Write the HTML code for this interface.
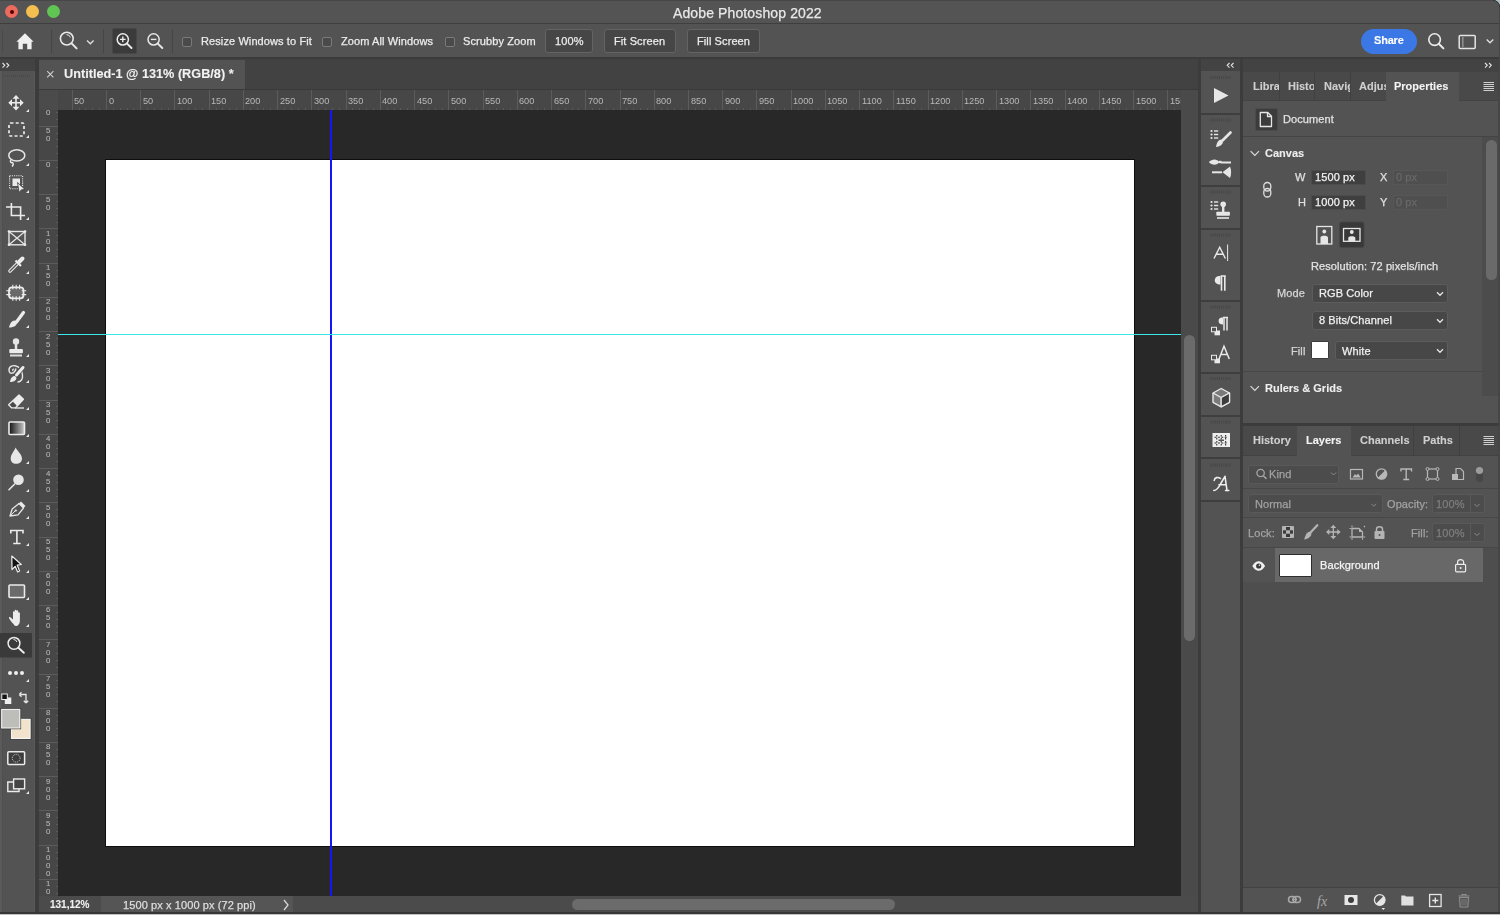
<!DOCTYPE html><html><head><meta charset="utf-8"><style>
*{margin:0;padding:0;box-sizing:border-box}
html,body{width:1500px;height:915px;overflow:hidden;background:#535353;font-family:"Liberation Sans",sans-serif;color:#e8e8e8;font-size:11px}
.a{position:absolute}
.t{position:absolute;white-space:nowrap;line-height:1;-webkit-text-stroke:0.25px currentColor;will-change:transform}
svg{position:absolute;overflow:visible}
.t[style*="bold"]{-webkit-text-stroke:0.1px currentColor}
</style></head><body><div class="a" style="left:0px;top:0px;width:1500px;height:23px;background:#545454;"></div>
<div class="a" style="left:0px;top:0px;width:1500px;height:1px;background:#474747;"></div>
<div class="a" style="left:0px;top:23px;width:1500px;height:1px;background:#3e3e3e;"></div>
<div class="a" style="left:5px;top:5px;width:13px;height:13px;border-radius:50%;background:#ed6a5e"></div>
<div class="a" style="left:9.5px;top:9.5px;width:4px;height:4px;border-radius:50%;background:#4d0000"></div>
<div class="a" style="left:26px;top:5px;width:13px;height:13px;border-radius:50%;background:#f5bf4f"></div>
<div class="a" style="left:47px;top:5px;width:13px;height:13px;border-radius:50%;background:#61c554"></div>
<div class="t" style="left:673px;top:6px;font-size:14px;color:#e8e8e8;font-weight:normal;letter-spacing:0.12px">Adobe Photoshop 2022</div>
<div class="a" style="left:0px;top:24px;width:1500px;height:33px;background:#535353;"></div>
<div class="a" style="left:0px;top:57px;width:1500px;height:2px;background:#3b3b3b;"></div>
<div class="a" style="left:2px;top:30px;width:1px;height:23px;background:#4a4a4a"></div>
<svg style="left:0;top:0" width="200" height="60">
 <path d="M25 33.2 L33.6 41.8 L31.6 41.8 L31.6 49.2 L27.2 49.2 L27.2 43.8 L22.8 43.8 L22.8 49.2 L18.4 49.2 L18.4 41.8 L16.4 41.8 Z" fill="#efefef"/>
 <circle cx="66.8" cy="38.6" r="6.4" stroke="#e8e8e8" stroke-width="1.6" fill="none"/>
 <path d="M66.5 34.6 A4 4 0 0 1 70.4 37.4" stroke="#e8e8e8" stroke-width="1" fill="none"/>
 <path d="M71.6 43.4 L76.6 48.4" stroke="#e8e8e8" stroke-width="2" stroke-linecap="round"/>
 <path d="M87 40.5 L90.3 43.8 L93.6 40.5" stroke="#e0e0e0" stroke-width="1.3" fill="none"/>
</svg>
<div class="a" style="left:51px;top:29px;width:1px;height:24px;background:#464646"></div>
<div class="a" style="left:103px;top:29px;width:1px;height:24px;background:#464646"></div>
<div class="a" style="left:172px;top:29px;width:1px;height:24px;background:#464646"></div>
<div class="a" style="left:112px;top:28px;width:25px;height:26px;background:#3b3b3b;border:1px solid #474747;border-radius:2px"></div>
<svg style="left:0;top:0" width="200" height="60">
 <circle cx="122.8" cy="39.4" r="5.6" stroke="#ececec" stroke-width="1.5" fill="none"/>
 <path d="M120 39.4 H125.6 M122.8 36.6 V42.2" stroke="#ececec" stroke-width="1.4"/>
 <path d="M127 43.6 L131.5 48" stroke="#ececec" stroke-width="2" stroke-linecap="round"/>
 <circle cx="153.6" cy="39.4" r="5.6" stroke="#e6e6e6" stroke-width="1.5" fill="none"/>
 <path d="M150.8 39.4 H156.4" stroke="#e6e6e6" stroke-width="1.4"/>
 <path d="M157.8 43.6 L162.3 48" stroke="#e6e6e6" stroke-width="2" stroke-linecap="round"/>
</svg>
<div class="a" style="left:182px;top:37px;width:10px;height:10px;border:1px solid #7a7a7a;background:#4a4a4a;border-radius:2px"></div>
<div class="t" style="left:200.5px;top:36px;font-size:11px;letter-spacing:0.1px;color:#ececec;font-weight:normal">Resize Windows to Fit</div>
<div class="a" style="left:322px;top:37px;width:10px;height:10px;border:1px solid #7a7a7a;background:#4a4a4a;border-radius:2px"></div>
<div class="t" style="left:340.7px;top:36px;font-size:11px;letter-spacing:0.1px;color:#ececec">Zoom All Windows</div>
<div class="a" style="left:445px;top:37px;width:10px;height:10px;border:1px solid #7a7a7a;background:#4a4a4a;border-radius:2px"></div>
<div class="t" style="left:463.3px;top:36px;font-size:11px;letter-spacing:0.1px;color:#ececec">Scrubby Zoom</div>
<div class="a" style="left:545px;top:29px;width:48px;height:24px;background:#464646;border:1px solid #646464;border-radius:3px"></div>
<div class="t" style="left:554.5px;top:36px;font-size:11px;letter-spacing:0.1px;color:#ececec">100%</div>
<div class="a" style="left:604px;top:29px;width:72px;height:24px;background:#464646;border:1px solid #646464;border-radius:3px"></div>
<div class="t" style="left:614px;top:36px;font-size:11px;letter-spacing:0.1px;color:#ececec">Fit Screen</div>
<div class="a" style="left:687px;top:29px;width:73px;height:24px;background:#464646;border:1px solid #646464;border-radius:3px"></div>
<div class="t" style="left:696.5px;top:36px;font-size:11px;letter-spacing:0.1px;color:#ececec">Fill Screen</div>
<div class="a" style="left:1361px;top:29px;width:56px;height:25px;background:#3b78e6;border-radius:13px"></div>
<div class="t" style="left:1374px;top:35px;font-size:11px;color:#ffffff;font-weight:bold;letter-spacing:-0.2px">Share</div>
<svg style="left:1400px;top:0" width="100" height="60">
 <circle cx="34.6" cy="39.6" r="5.8" stroke="#ececec" stroke-width="1.6" fill="none"/>
 <path d="M38.8 43.8 L43.4 48.4" stroke="#ececec" stroke-width="2" stroke-linecap="round"/>
 <rect x="59.2" y="35.4" width="16" height="13" rx="1" stroke="#e4e4e4" stroke-width="1.5" fill="none"/>
 <path d="M62.8 37.5 V46.5" stroke="#cfcfcf" stroke-width="1.5" stroke-dasharray="1 1"/>
 <path d="M86.7 39.5 L90 42.8 L93.3 39.5" stroke="#e0e0e0" stroke-width="1.3" fill="none"/>
</svg>

<div class="a" style="left:0px;top:59px;width:35px;height:854px;background:#535353;"></div>
<div class="a" style="left:0px;top:59px;width:35px;height:12px;background:#434343;"></div>
<svg style="left:0;top:55px" width="20" height="20"><path d="M2.5 8 L4.8 10.3 L2.5 12.6 M6.5 8 L8.8 10.3 L6.5 12.6" stroke="#e4e4e4" stroke-width="1.1" fill="none"/></svg>
<div class="a" style="left:35px;top:59px;width:4px;height:854px;background:#3c3c3c;"></div>
<div class="a" style="left:0px;top:71px;width:2px;height:841px;background:#5a5a5a;"></div>
<div class="a" style="left:2px;top:71px;width:1px;height:841px;background:#4f4f4f;"></div>
<div class="a" style="left:34px;top:71px;width:1px;height:841px;background:#595959;"></div>
<svg style="left:0;top:0" width="35" height="913">
<g fill="#e9e9e9" stroke="none">
 <!-- small corner triangles -->
 <path d="M26 112 L29 109 L29 112 Z"/>
 <path d="M26 138 L29 135 L29 138 Z"/>
 <path d="M26 166 L29 163 L29 166 Z"/>
 <path d="M26 193 L29 190 L29 193 Z"/>
 <path d="M26 220 L29 217 L29 220 Z"/>
 <path d="M26 274 L29 271 L29 274 Z"/>
 <path d="M26 301 L29 298 L29 301 Z"/>
 <path d="M26 328 L29 325 L29 328 Z"/>
 <path d="M26 357 L29 354 L29 357 Z"/>
 <path d="M26 383 L29 380 L29 383 Z"/>
 <path d="M26 410 L29 407 L29 410 Z"/>
 <path d="M26 437 L29 434 L29 437 Z"/>
 <path d="M26 464 L29 461 L29 464 Z"/>
 <path d="M26 492 L29 489 L29 492 Z"/>
 <path d="M26 519 L29 516 L29 519 Z"/>
 <path d="M26 546 L29 543 L29 546 Z"/>
 <path d="M26 573 L29 570 L29 573 Z"/>
 <path d="M26 600 L29 597 L29 600 Z"/>
 <path d="M26 627 L29 624 L29 627 Z"/>
 <path d="M26 682 L29 679 L29 682 Z"/>
 <path d="M26 794 L29 791 L29 794 Z"/>
</g>
<!-- grip -->
<path d="M3 76 H30" stroke="#4a4a4a" stroke-width="2" stroke-dasharray="1 1"/>
<!-- move -->
<g stroke="#ececec" fill="#ececec">
 <path d="M16 95 L19.5 98.8 L12.5 98.8 Z M16 110.5 L19.5 106.7 L12.5 106.7 Z M8.3 102.8 L12 99.3 L12 106.3 Z M23.7 102.8 L20 99.3 L20 106.3 Z" stroke="none"/>
 <path d="M16 98 V108 M11 102.8 H21" stroke-width="1.6" fill="none"/>
</g>
<!-- marquee -->
<rect x="9" y="123" width="15" height="13" rx="1.5" stroke="#ececec" stroke-width="1.7" fill="none" stroke-dasharray="3 2.2"/>
<!-- lasso -->
<ellipse cx="16.8" cy="155.4" rx="8" ry="5.6" stroke="#e6e6e6" stroke-width="1.5" fill="none"/>
<path d="M11 160 C9.5 161.5 11 163 12.5 162.5 C14 163.5 13 165.5 12 166.5" stroke="#e6e6e6" stroke-width="1.5" fill="none"/>
<!-- object selection -->
<rect x="9.6" y="175.8" width="13" height="13" stroke="#e6e6e6" stroke-width="1.1" fill="none" stroke-dasharray="1.1 1.1"/>
<rect x="12.5" y="178.5" width="7.5" height="7.5" fill="#e9e9e9"/>
<path d="M17.5 182.5 L25 189.5 L21.5 189.8 L19 192.5 Z" fill="#e9e9e9" stroke="#3a3a3a" stroke-width="0.8"/>
<!-- crop -->
<path d="M6 207 H11 M11.4 203 V215.5 H21 M11.4 207 H20.6 V220 M21 215.5 H25" stroke="#ececec" stroke-width="1.6" fill="none"/>
<!-- frame -->
<rect x="9" y="231.5" width="16" height="13.3" stroke="#e6e6e6" stroke-width="1.4" fill="none"/>
<path d="M9 231.5 L25 244.8 M25 231.5 L9 244.8" stroke="#e6e6e6" stroke-width="1.2"/>
<g fill="#ececec"><circle cx="9" cy="231.5" r="1.3"/><circle cx="25" cy="231.5" r="1.3"/><circle cx="9" cy="244.8" r="1.3"/><circle cx="25" cy="244.8" r="1.3"/></g>
<!-- eyedropper -->
<path d="M10 271 L18 263" stroke="#e6e6e6" stroke-width="3.6" stroke-linecap="round"/>
<path d="M10 271 L18 263" stroke="#535353" stroke-width="1.2" stroke-linecap="round"/>
<path d="M19 262 L22.5 258.5" stroke="#ececec" stroke-width="4" stroke-linecap="round"/>
<path d="M15.5 260.5 L21 266" stroke="#ececec" stroke-width="2.2"/>
<!-- healing -->
<rect x="9" y="287.3" width="14.5" height="11" rx="3" stroke="#ececec" stroke-width="1.8" fill="#6a6a6a"/>
<path d="M12.8 284.8 V289.3 M16.2 284.8 V289.3 M19.6 284.8 V289.3 M12.8 296.3 V300.8 M16.2 296.3 V300.8 M19.6 296.3 V300.8 M6.3 290.8 H10.8 M6.3 294.6 H10.8 M21.7 290.8 H26.2 M21.7 294.6 H26.2" stroke="#ececec" stroke-width="1.1"/>
<!-- brush -->
<path d="M16.5 322 L23.5 312.5" stroke="#ececec" stroke-width="3.2" stroke-linecap="round"/>
<path d="M15.5 320.5 C12 320 10 323 9 327.5 C13 327.5 16.5 326 17 323 Z" fill="#ececec"/>
<!-- stamp -->
<circle cx="16" cy="341.5" r="3.2" fill="#e6e6e6"/>
<path d="M16 343 V349" stroke="#e6e6e6" stroke-width="2.5"/>
<rect x="9.3" y="349" width="13.6" height="4.2" rx="1" fill="#ececec"/>
<rect x="10" y="354.5" width="12" height="2" fill="#dcdcdc"/>
<!-- history brush -->
<path d="M16 368.5 C15 374 9 375 9 370 C9 366 13 365 16 366 C20 367 22 371 22.5 375 C23 379 21 382 17.5 382" stroke="#e6e6e6" stroke-width="1.4" fill="none"/>
<path d="M13 371 C12 369.5 13.5 368.5 14 369.5" stroke="#e6e6e6" stroke-width="1.2" fill="none"/>
<path d="M16 375 L23 367" stroke="#535353" stroke-width="5" stroke-linecap="round"/>
<path d="M16.5 375 L23 367.5" stroke="#ececec" stroke-width="3" stroke-linecap="round"/>
<path d="M15 376 C12 376 10.5 378.5 10 382 C13 382 16 381 16.5 378 Z" fill="#ececec"/>
<!-- eraser -->
<path d="M19 395 L23.5 399.3 L15.5 407.8 L11.5 407.8 L8.6 404.8 Z" fill="#4a4a4a" stroke="#ececec" stroke-width="1.3" stroke-linejoin="round"/>
<path d="M19 395 L23.5 399.3 L17 406 L12.8 401.6 Z" fill="#ececec"/>
<path d="M15 408 H24" stroke="#e6e6e6" stroke-width="1.4"/>
<!-- gradient -->
<defs><linearGradient id="gr" x1="0" x2="1" y1="0" y2="0"><stop offset="0" stop-color="#111"/><stop offset="1" stop-color="#c8c8c8"/></linearGradient></defs>
<rect x="9" y="422" width="15.5" height="12.5" stroke="#ececec" stroke-width="1.6" fill="url(#gr)" rx="1"/>
<!-- blur drop -->
<path d="M15.6 447.5 C17 451 22 454 22 458.5 C22 462 19.5 463.8 16.2 463.8 C12.8 463.8 10.7 461.8 10.7 458.5 C10.7 454 14.5 451 15.6 447.5 Z" fill="#e6e6e6"/>
<!-- dodge -->
<circle cx="18.5" cy="479.8" r="5.3" fill="#e6e6e6"/>
<path d="M14.5 484.2 L9 489.8" stroke="#e6e6e6" stroke-width="1.6" stroke-linecap="round"/>
<!-- pen -->
<path d="M10 516 L12.2 509 L19 503.5 L23.5 508 L18 514.8 Z" fill="none" stroke="#e6e6e6" stroke-width="1.3" stroke-linejoin="round"/>
<path d="M19 503.5 L21 501.5 L25.5 506 L23.5 508 Z" fill="#ececec"/>
<path d="M10 516 L15.5 510.5" stroke="#e6e6e6" stroke-width="1"/>
<circle cx="15.8" cy="510.5" r="1.1" fill="#ececec"/>
<!-- type -->
<path d="M10.8 533.6 V530.5 H23 V533.6 M16.9 530.5 V543.5 M13.2 543.5 H20.6" stroke="#ececec" stroke-width="1.6" fill="none"/>
<!-- path select -->
<path d="M11.8 556 L21.3 564.5 L17.2 565.2 L19.6 571 L17.6 572 L15.2 566.3 L12 569.5 Z" fill="#111" stroke="#ececec" stroke-width="1.2" stroke-linejoin="round"/>
<!-- rectangle -->
<rect x="9" y="585" width="15.5" height="12.5" rx="1" stroke="#ececec" stroke-width="1.6" fill="#6b6b6b"/>
<!-- hand -->
<path d="M13.5 624 C11.5 622 9.5 619.5 9 618 C8.7 617 9.8 616.7 10.6 617.4 L13 619.6 L13 612 C13 611 14.7 611 14.7 612 V617 L14.7 610.6 C14.7 609.6 16.4 609.6 16.4 610.6 V617 L16.4 611 C16.4 610 18.2 610 18.2 611 V617.5 L18.2 613 C18.2 612 19.9 612 19.9 613 V620 C19.9 624 18 626 15.8 626 C14.8 626 14 625 13.5 624 Z" fill="#ececec"/>
<!-- zoom highlight -->
<rect x="0" y="633" width="32" height="24.5" fill="#3a3a3a"/>
<circle cx="14" cy="643.3" r="5.9" stroke="#ececec" stroke-width="1.5" fill="none"/>
<path d="M13.5 639.5 A3.7 3.7 0 0 1 17 642" stroke="#ececec" stroke-width="1" fill="none"/>
<path d="M18.4 647.8 L23.8 652.8" stroke="#ececec" stroke-width="2" stroke-linecap="round"/>
<!-- more -->
<g fill="#efefef"><circle cx="10" cy="673" r="2"/><circle cx="16" cy="673" r="2"/><circle cx="22" cy="673" r="2"/></g>
<!-- default colors -->
<rect x="4.8" y="697.5" width="6.5" height="6.5" fill="#efefef"/>
<rect x="1.8" y="694" width="5.5" height="5.5" fill="#111" stroke="#efefef" stroke-width="1"/>
<path d="M20.5 694.5 H26 V702 M19.2 694.5 L21.5 692.3 M19.2 694.5 L21.5 696.7 M26 703 L23.8 700.7 M26 703 L28.2 700.7" stroke="#e6e6e6" stroke-width="1.3" fill="none"/>
<!-- fg/bg -->
<rect x="11.3" y="719" width="19" height="19.5" fill="#f2e4cc" stroke="#f4f4f4" stroke-width="1.4"/>
<rect x="10.6" y="718.3" width="20.4" height="21" fill="none" stroke="#2a2a2a" stroke-width="0.6"/>
<rect x="1.5" y="709.2" width="18.5" height="19" fill="#bdbdb9" stroke="#f4f4f4" stroke-width="1.4"/>
<rect x="0.8" y="708.5" width="20" height="20.4" fill="none" stroke="#2a2a2a" stroke-width="0.6"/>
<!-- quick mask -->
<rect x="7.8" y="751.8" width="16.8" height="12.8" rx="1" stroke="#ececec" stroke-width="1.5" fill="#3d3d3d"/>
<circle cx="16.2" cy="758.2" r="3.9" stroke="#d8d8d8" stroke-width="1" fill="none" stroke-dasharray="1 1"/>
<!-- screen mode -->
<rect x="13.6" y="779" width="11" height="9.8" stroke="#ececec" stroke-width="1.4" fill="#444"/>
<path d="M13 782 H7.8 V791.5 H19 V789" stroke="#ececec" stroke-width="1.4" fill="none"/>
</svg>

<div class="a" style="left:39px;top:59px;width:1159px;height:30px;background:#424242;"></div>
<div class="a" style="left:39px;top:60px;width:206px;height:29px;background:#535353;"></div>
<svg style="left:40px;top:64px" width="20" height="20"><path d="M7.2 7.2 L13.4 13.4 M13.4 7.2 L7.2 13.4" stroke="#d0d0d0" stroke-width="1.1"/></svg>
<div class="t" style="left:64px;top:68px;font-size:12.7px;color:#f2f2f2;font-weight:bold;">Untitled-1 @ 131% (RGB/8) *</div>
<div class="a" style="left:39px;top:89px;width:1159px;height:1px;background:#3a3a3a;"></div>
<div class="a" style="left:39px;top:90px;width:1142px;height:20px;background:#474747;"></div>
<div class="a" style="left:39px;top:110px;width:19px;height:786px;background:#474747;"></div>
<div class="a" style="left:39px;top:90px;width:19px;height:20px;background:#4b4b4b;"></div>
<div class="a" style="left:58px;top:110px;width:1123px;height:786px;background:#282828;"></div>
<div class="a" style="left:105px;top:159px;width:1030px;height:688px;background:#0e0e0e;"></div>
<div class="a" style="left:106px;top:160px;width:1028px;height:686px;background:#ffffff;"></div>
<div class="a" style="left:330px;top:110px;width:2px;height:786px;background:#1616f2;"></div>
<div class="a" style="left:58px;top:333.8px;width:1123px;height:1.5px;background:#3ee6ec;"></div>
<div class="a" style="left:58px;top:90px;width:1123px;height:20px;overflow:hidden"><div class="a" style="left:13.77px;top:0px;width:1px;height:20px;background:#5c5c5c"></div><div class="t" style="left:16.27px;top:6.8px;font-size:9.2px;color:#b8b8b8;-webkit-text-stroke:0">50</div><div class="a" style="left:20.61px;top:17.5px;width:1px;height:2px;background:#5a5a5a"></div><div class="a" style="left:27.46px;top:17.5px;width:1px;height:2px;background:#5a5a5a"></div><div class="a" style="left:34.31px;top:17.5px;width:1px;height:2px;background:#5a5a5a"></div><div class="a" style="left:41.15px;top:17.5px;width:1px;height:2px;background:#5a5a5a"></div><div class="a" style="left:48.00px;top:0px;width:1px;height:20px;background:#5c5c5c"></div><div class="t" style="left:50.50px;top:6.8px;font-size:9.2px;color:#b8b8b8;-webkit-text-stroke:0">0</div><div class="a" style="left:54.85px;top:17.5px;width:1px;height:2px;background:#5a5a5a"></div><div class="a" style="left:61.69px;top:17.5px;width:1px;height:2px;background:#5a5a5a"></div><div class="a" style="left:68.54px;top:17.5px;width:1px;height:2px;background:#5a5a5a"></div><div class="a" style="left:75.39px;top:17.5px;width:1px;height:2px;background:#5a5a5a"></div><div class="a" style="left:82.24px;top:0px;width:1px;height:20px;background:#5c5c5c"></div><div class="t" style="left:84.74px;top:6.8px;font-size:9.2px;color:#b8b8b8;-webkit-text-stroke:0">50</div><div class="a" style="left:89.08px;top:17.5px;width:1px;height:2px;background:#5a5a5a"></div><div class="a" style="left:95.93px;top:17.5px;width:1px;height:2px;background:#5a5a5a"></div><div class="a" style="left:102.78px;top:17.5px;width:1px;height:2px;background:#5a5a5a"></div><div class="a" style="left:109.62px;top:17.5px;width:1px;height:2px;background:#5a5a5a"></div><div class="a" style="left:116.47px;top:0px;width:1px;height:20px;background:#5c5c5c"></div><div class="t" style="left:118.97px;top:6.8px;font-size:9.2px;color:#b8b8b8;-webkit-text-stroke:0">100</div><div class="a" style="left:123.32px;top:17.5px;width:1px;height:2px;background:#5a5a5a"></div><div class="a" style="left:130.16px;top:17.5px;width:1px;height:2px;background:#5a5a5a"></div><div class="a" style="left:137.01px;top:17.5px;width:1px;height:2px;background:#5a5a5a"></div><div class="a" style="left:143.86px;top:17.5px;width:1px;height:2px;background:#5a5a5a"></div><div class="a" style="left:150.70px;top:0px;width:1px;height:20px;background:#5c5c5c"></div><div class="t" style="left:153.20px;top:6.8px;font-size:9.2px;color:#b8b8b8;-webkit-text-stroke:0">150</div><div class="a" style="left:157.55px;top:17.5px;width:1px;height:2px;background:#5a5a5a"></div><div class="a" style="left:164.40px;top:17.5px;width:1px;height:2px;background:#5a5a5a"></div><div class="a" style="left:171.25px;top:17.5px;width:1px;height:2px;background:#5a5a5a"></div><div class="a" style="left:178.09px;top:17.5px;width:1px;height:2px;background:#5a5a5a"></div><div class="a" style="left:184.94px;top:0px;width:1px;height:20px;background:#5c5c5c"></div><div class="t" style="left:187.44px;top:6.8px;font-size:9.2px;color:#b8b8b8;-webkit-text-stroke:0">200</div><div class="a" style="left:191.79px;top:17.5px;width:1px;height:2px;background:#5a5a5a"></div><div class="a" style="left:198.63px;top:17.5px;width:1px;height:2px;background:#5a5a5a"></div><div class="a" style="left:205.48px;top:17.5px;width:1px;height:2px;background:#5a5a5a"></div><div class="a" style="left:212.33px;top:17.5px;width:1px;height:2px;background:#5a5a5a"></div><div class="a" style="left:219.18px;top:0px;width:1px;height:20px;background:#5c5c5c"></div><div class="t" style="left:221.68px;top:6.8px;font-size:9.2px;color:#b8b8b8;-webkit-text-stroke:0">250</div><div class="a" style="left:226.02px;top:17.5px;width:1px;height:2px;background:#5a5a5a"></div><div class="a" style="left:232.87px;top:17.5px;width:1px;height:2px;background:#5a5a5a"></div><div class="a" style="left:239.72px;top:17.5px;width:1px;height:2px;background:#5a5a5a"></div><div class="a" style="left:246.56px;top:17.5px;width:1px;height:2px;background:#5a5a5a"></div><div class="a" style="left:253.41px;top:0px;width:1px;height:20px;background:#5c5c5c"></div><div class="t" style="left:255.91px;top:6.8px;font-size:9.2px;color:#b8b8b8;-webkit-text-stroke:0">300</div><div class="a" style="left:260.26px;top:17.5px;width:1px;height:2px;background:#5a5a5a"></div><div class="a" style="left:267.10px;top:17.5px;width:1px;height:2px;background:#5a5a5a"></div><div class="a" style="left:273.95px;top:17.5px;width:1px;height:2px;background:#5a5a5a"></div><div class="a" style="left:280.80px;top:17.5px;width:1px;height:2px;background:#5a5a5a"></div><div class="a" style="left:287.64px;top:0px;width:1px;height:20px;background:#5c5c5c"></div><div class="t" style="left:290.14px;top:6.8px;font-size:9.2px;color:#b8b8b8;-webkit-text-stroke:0">350</div><div class="a" style="left:294.49px;top:17.5px;width:1px;height:2px;background:#5a5a5a"></div><div class="a" style="left:301.34px;top:17.5px;width:1px;height:2px;background:#5a5a5a"></div><div class="a" style="left:308.19px;top:17.5px;width:1px;height:2px;background:#5a5a5a"></div><div class="a" style="left:315.03px;top:17.5px;width:1px;height:2px;background:#5a5a5a"></div><div class="a" style="left:321.88px;top:0px;width:1px;height:20px;background:#5c5c5c"></div><div class="t" style="left:324.38px;top:6.8px;font-size:9.2px;color:#b8b8b8;-webkit-text-stroke:0">400</div><div class="a" style="left:328.73px;top:17.5px;width:1px;height:2px;background:#5a5a5a"></div><div class="a" style="left:335.57px;top:17.5px;width:1px;height:2px;background:#5a5a5a"></div><div class="a" style="left:342.42px;top:17.5px;width:1px;height:2px;background:#5a5a5a"></div><div class="a" style="left:349.27px;top:17.5px;width:1px;height:2px;background:#5a5a5a"></div><div class="a" style="left:356.12px;top:0px;width:1px;height:20px;background:#5c5c5c"></div><div class="t" style="left:358.62px;top:6.8px;font-size:9.2px;color:#b8b8b8;-webkit-text-stroke:0">450</div><div class="a" style="left:362.96px;top:17.5px;width:1px;height:2px;background:#5a5a5a"></div><div class="a" style="left:369.81px;top:17.5px;width:1px;height:2px;background:#5a5a5a"></div><div class="a" style="left:376.66px;top:17.5px;width:1px;height:2px;background:#5a5a5a"></div><div class="a" style="left:383.50px;top:17.5px;width:1px;height:2px;background:#5a5a5a"></div><div class="a" style="left:390.35px;top:0px;width:1px;height:20px;background:#5c5c5c"></div><div class="t" style="left:392.85px;top:6.8px;font-size:9.2px;color:#b8b8b8;-webkit-text-stroke:0">500</div><div class="a" style="left:397.20px;top:17.5px;width:1px;height:2px;background:#5a5a5a"></div><div class="a" style="left:404.04px;top:17.5px;width:1px;height:2px;background:#5a5a5a"></div><div class="a" style="left:410.89px;top:17.5px;width:1px;height:2px;background:#5a5a5a"></div><div class="a" style="left:417.74px;top:17.5px;width:1px;height:2px;background:#5a5a5a"></div><div class="a" style="left:424.58px;top:0px;width:1px;height:20px;background:#5c5c5c"></div><div class="t" style="left:427.08px;top:6.8px;font-size:9.2px;color:#b8b8b8;-webkit-text-stroke:0">550</div><div class="a" style="left:431.43px;top:17.5px;width:1px;height:2px;background:#5a5a5a"></div><div class="a" style="left:438.28px;top:17.5px;width:1px;height:2px;background:#5a5a5a"></div><div class="a" style="left:445.13px;top:17.5px;width:1px;height:2px;background:#5a5a5a"></div><div class="a" style="left:451.97px;top:17.5px;width:1px;height:2px;background:#5a5a5a"></div><div class="a" style="left:458.82px;top:0px;width:1px;height:20px;background:#5c5c5c"></div><div class="t" style="left:461.32px;top:6.8px;font-size:9.2px;color:#b8b8b8;-webkit-text-stroke:0">600</div><div class="a" style="left:465.67px;top:17.5px;width:1px;height:2px;background:#5a5a5a"></div><div class="a" style="left:472.51px;top:17.5px;width:1px;height:2px;background:#5a5a5a"></div><div class="a" style="left:479.36px;top:17.5px;width:1px;height:2px;background:#5a5a5a"></div><div class="a" style="left:486.21px;top:17.5px;width:1px;height:2px;background:#5a5a5a"></div><div class="a" style="left:493.06px;top:0px;width:1px;height:20px;background:#5c5c5c"></div><div class="t" style="left:495.56px;top:6.8px;font-size:9.2px;color:#b8b8b8;-webkit-text-stroke:0">650</div><div class="a" style="left:499.90px;top:17.5px;width:1px;height:2px;background:#5a5a5a"></div><div class="a" style="left:506.75px;top:17.5px;width:1px;height:2px;background:#5a5a5a"></div><div class="a" style="left:513.60px;top:17.5px;width:1px;height:2px;background:#5a5a5a"></div><div class="a" style="left:520.44px;top:17.5px;width:1px;height:2px;background:#5a5a5a"></div><div class="a" style="left:527.29px;top:0px;width:1px;height:20px;background:#5c5c5c"></div><div class="t" style="left:529.79px;top:6.8px;font-size:9.2px;color:#b8b8b8;-webkit-text-stroke:0">700</div><div class="a" style="left:534.14px;top:17.5px;width:1px;height:2px;background:#5a5a5a"></div><div class="a" style="left:540.98px;top:17.5px;width:1px;height:2px;background:#5a5a5a"></div><div class="a" style="left:547.83px;top:17.5px;width:1px;height:2px;background:#5a5a5a"></div><div class="a" style="left:554.68px;top:17.5px;width:1px;height:2px;background:#5a5a5a"></div><div class="a" style="left:561.52px;top:0px;width:1px;height:20px;background:#5c5c5c"></div><div class="t" style="left:564.02px;top:6.8px;font-size:9.2px;color:#b8b8b8;-webkit-text-stroke:0">750</div><div class="a" style="left:568.37px;top:17.5px;width:1px;height:2px;background:#5a5a5a"></div><div class="a" style="left:575.22px;top:17.5px;width:1px;height:2px;background:#5a5a5a"></div><div class="a" style="left:582.07px;top:17.5px;width:1px;height:2px;background:#5a5a5a"></div><div class="a" style="left:588.91px;top:17.5px;width:1px;height:2px;background:#5a5a5a"></div><div class="a" style="left:595.76px;top:0px;width:1px;height:20px;background:#5c5c5c"></div><div class="t" style="left:598.26px;top:6.8px;font-size:9.2px;color:#b8b8b8;-webkit-text-stroke:0">800</div><div class="a" style="left:602.61px;top:17.5px;width:1px;height:2px;background:#5a5a5a"></div><div class="a" style="left:609.45px;top:17.5px;width:1px;height:2px;background:#5a5a5a"></div><div class="a" style="left:616.30px;top:17.5px;width:1px;height:2px;background:#5a5a5a"></div><div class="a" style="left:623.15px;top:17.5px;width:1px;height:2px;background:#5a5a5a"></div><div class="a" style="left:630.00px;top:0px;width:1px;height:20px;background:#5c5c5c"></div><div class="t" style="left:632.50px;top:6.8px;font-size:9.2px;color:#b8b8b8;-webkit-text-stroke:0">850</div><div class="a" style="left:636.84px;top:17.5px;width:1px;height:2px;background:#5a5a5a"></div><div class="a" style="left:643.69px;top:17.5px;width:1px;height:2px;background:#5a5a5a"></div><div class="a" style="left:650.54px;top:17.5px;width:1px;height:2px;background:#5a5a5a"></div><div class="a" style="left:657.38px;top:17.5px;width:1px;height:2px;background:#5a5a5a"></div><div class="a" style="left:664.23px;top:0px;width:1px;height:20px;background:#5c5c5c"></div><div class="t" style="left:666.73px;top:6.8px;font-size:9.2px;color:#b8b8b8;-webkit-text-stroke:0">900</div><div class="a" style="left:671.08px;top:17.5px;width:1px;height:2px;background:#5a5a5a"></div><div class="a" style="left:677.92px;top:17.5px;width:1px;height:2px;background:#5a5a5a"></div><div class="a" style="left:684.77px;top:17.5px;width:1px;height:2px;background:#5a5a5a"></div><div class="a" style="left:691.62px;top:17.5px;width:1px;height:2px;background:#5a5a5a"></div><div class="a" style="left:698.47px;top:0px;width:1px;height:20px;background:#5c5c5c"></div><div class="t" style="left:700.97px;top:6.8px;font-size:9.2px;color:#b8b8b8;-webkit-text-stroke:0">950</div><div class="a" style="left:705.31px;top:17.5px;width:1px;height:2px;background:#5a5a5a"></div><div class="a" style="left:712.16px;top:17.5px;width:1px;height:2px;background:#5a5a5a"></div><div class="a" style="left:719.01px;top:17.5px;width:1px;height:2px;background:#5a5a5a"></div><div class="a" style="left:725.85px;top:17.5px;width:1px;height:2px;background:#5a5a5a"></div><div class="a" style="left:732.70px;top:0px;width:1px;height:20px;background:#5c5c5c"></div><div class="t" style="left:735.20px;top:6.8px;font-size:9.2px;color:#b8b8b8;-webkit-text-stroke:0">1000</div><div class="a" style="left:739.55px;top:17.5px;width:1px;height:2px;background:#5a5a5a"></div><div class="a" style="left:746.39px;top:17.5px;width:1px;height:2px;background:#5a5a5a"></div><div class="a" style="left:753.24px;top:17.5px;width:1px;height:2px;background:#5a5a5a"></div><div class="a" style="left:760.09px;top:17.5px;width:1px;height:2px;background:#5a5a5a"></div><div class="a" style="left:766.93px;top:0px;width:1px;height:20px;background:#5c5c5c"></div><div class="t" style="left:769.43px;top:6.8px;font-size:9.2px;color:#b8b8b8;-webkit-text-stroke:0">1050</div><div class="a" style="left:773.78px;top:17.5px;width:1px;height:2px;background:#5a5a5a"></div><div class="a" style="left:780.63px;top:17.5px;width:1px;height:2px;background:#5a5a5a"></div><div class="a" style="left:787.48px;top:17.5px;width:1px;height:2px;background:#5a5a5a"></div><div class="a" style="left:794.32px;top:17.5px;width:1px;height:2px;background:#5a5a5a"></div><div class="a" style="left:801.17px;top:0px;width:1px;height:20px;background:#5c5c5c"></div><div class="t" style="left:803.67px;top:6.8px;font-size:9.2px;color:#b8b8b8;-webkit-text-stroke:0">1100</div><div class="a" style="left:808.02px;top:17.5px;width:1px;height:2px;background:#5a5a5a"></div><div class="a" style="left:814.86px;top:17.5px;width:1px;height:2px;background:#5a5a5a"></div><div class="a" style="left:821.71px;top:17.5px;width:1px;height:2px;background:#5a5a5a"></div><div class="a" style="left:828.56px;top:17.5px;width:1px;height:2px;background:#5a5a5a"></div><div class="a" style="left:835.40px;top:0px;width:1px;height:20px;background:#5c5c5c"></div><div class="t" style="left:837.90px;top:6.8px;font-size:9.2px;color:#b8b8b8;-webkit-text-stroke:0">1150</div><div class="a" style="left:842.25px;top:17.5px;width:1px;height:2px;background:#5a5a5a"></div><div class="a" style="left:849.10px;top:17.5px;width:1px;height:2px;background:#5a5a5a"></div><div class="a" style="left:855.95px;top:17.5px;width:1px;height:2px;background:#5a5a5a"></div><div class="a" style="left:862.79px;top:17.5px;width:1px;height:2px;background:#5a5a5a"></div><div class="a" style="left:869.64px;top:0px;width:1px;height:20px;background:#5c5c5c"></div><div class="t" style="left:872.14px;top:6.8px;font-size:9.2px;color:#b8b8b8;-webkit-text-stroke:0">1200</div><div class="a" style="left:876.49px;top:17.5px;width:1px;height:2px;background:#5a5a5a"></div><div class="a" style="left:883.33px;top:17.5px;width:1px;height:2px;background:#5a5a5a"></div><div class="a" style="left:890.18px;top:17.5px;width:1px;height:2px;background:#5a5a5a"></div><div class="a" style="left:897.03px;top:17.5px;width:1px;height:2px;background:#5a5a5a"></div><div class="a" style="left:903.88px;top:0px;width:1px;height:20px;background:#5c5c5c"></div><div class="t" style="left:906.38px;top:6.8px;font-size:9.2px;color:#b8b8b8;-webkit-text-stroke:0">1250</div><div class="a" style="left:910.72px;top:17.5px;width:1px;height:2px;background:#5a5a5a"></div><div class="a" style="left:917.57px;top:17.5px;width:1px;height:2px;background:#5a5a5a"></div><div class="a" style="left:924.42px;top:17.5px;width:1px;height:2px;background:#5a5a5a"></div><div class="a" style="left:931.26px;top:17.5px;width:1px;height:2px;background:#5a5a5a"></div><div class="a" style="left:938.11px;top:0px;width:1px;height:20px;background:#5c5c5c"></div><div class="t" style="left:940.61px;top:6.8px;font-size:9.2px;color:#b8b8b8;-webkit-text-stroke:0">1300</div><div class="a" style="left:944.96px;top:17.5px;width:1px;height:2px;background:#5a5a5a"></div><div class="a" style="left:951.80px;top:17.5px;width:1px;height:2px;background:#5a5a5a"></div><div class="a" style="left:958.65px;top:17.5px;width:1px;height:2px;background:#5a5a5a"></div><div class="a" style="left:965.50px;top:17.5px;width:1px;height:2px;background:#5a5a5a"></div><div class="a" style="left:972.35px;top:0px;width:1px;height:20px;background:#5c5c5c"></div><div class="t" style="left:974.85px;top:6.8px;font-size:9.2px;color:#b8b8b8;-webkit-text-stroke:0">1350</div><div class="a" style="left:979.19px;top:17.5px;width:1px;height:2px;background:#5a5a5a"></div><div class="a" style="left:986.04px;top:17.5px;width:1px;height:2px;background:#5a5a5a"></div><div class="a" style="left:992.89px;top:17.5px;width:1px;height:2px;background:#5a5a5a"></div><div class="a" style="left:999.73px;top:17.5px;width:1px;height:2px;background:#5a5a5a"></div><div class="a" style="left:1006.58px;top:0px;width:1px;height:20px;background:#5c5c5c"></div><div class="t" style="left:1009.08px;top:6.8px;font-size:9.2px;color:#b8b8b8;-webkit-text-stroke:0">1400</div><div class="a" style="left:1013.43px;top:17.5px;width:1px;height:2px;background:#5a5a5a"></div><div class="a" style="left:1020.27px;top:17.5px;width:1px;height:2px;background:#5a5a5a"></div><div class="a" style="left:1027.12px;top:17.5px;width:1px;height:2px;background:#5a5a5a"></div><div class="a" style="left:1033.97px;top:17.5px;width:1px;height:2px;background:#5a5a5a"></div><div class="a" style="left:1040.82px;top:0px;width:1px;height:20px;background:#5c5c5c"></div><div class="t" style="left:1043.32px;top:6.8px;font-size:9.2px;color:#b8b8b8;-webkit-text-stroke:0">1450</div><div class="a" style="left:1047.66px;top:17.5px;width:1px;height:2px;background:#5a5a5a"></div><div class="a" style="left:1054.51px;top:17.5px;width:1px;height:2px;background:#5a5a5a"></div><div class="a" style="left:1061.36px;top:17.5px;width:1px;height:2px;background:#5a5a5a"></div><div class="a" style="left:1068.20px;top:17.5px;width:1px;height:2px;background:#5a5a5a"></div><div class="a" style="left:1075.05px;top:0px;width:1px;height:20px;background:#5c5c5c"></div><div class="t" style="left:1077.55px;top:6.8px;font-size:9.2px;color:#b8b8b8;-webkit-text-stroke:0">1500</div><div class="a" style="left:1081.90px;top:17.5px;width:1px;height:2px;background:#5a5a5a"></div><div class="a" style="left:1088.74px;top:17.5px;width:1px;height:2px;background:#5a5a5a"></div><div class="a" style="left:1095.59px;top:17.5px;width:1px;height:2px;background:#5a5a5a"></div><div class="a" style="left:1102.44px;top:17.5px;width:1px;height:2px;background:#5a5a5a"></div><div class="a" style="left:1109.29px;top:0px;width:1px;height:20px;background:#5c5c5c"></div><div class="t" style="left:1111.79px;top:6.8px;font-size:9.2px;color:#b8b8b8;-webkit-text-stroke:0">1550</div><div class="a" style="left:1116.13px;top:17.5px;width:1px;height:2px;background:#5a5a5a"></div><div class="a" style="left:1122.98px;top:17.5px;width:1px;height:2px;background:#5a5a5a"></div><div class="a" style="left:1129.83px;top:17.5px;width:1px;height:2px;background:#5a5a5a"></div><div class="a" style="left:1136.67px;top:17.5px;width:1px;height:2px;background:#5a5a5a"></div></div>
<div class="a" style="left:39px;top:110px;width:19px;height:786px;overflow:hidden"><div class="a" style="left:0px;top:-18.47px;width:19px;height:1px;background:#5c5c5c"></div><div class="t" style="left:7px;top:-17.07px;font-size:7.8px;color:#b4b4b4;-webkit-text-stroke:0.1px #b4b4b4">1</div><div class="t" style="left:7px;top:-9.07px;font-size:7.8px;color:#b4b4b4;-webkit-text-stroke:0.1px #b4b4b4">0</div><div class="t" style="left:7px;top:-1.07px;font-size:7.8px;color:#b4b4b4;-webkit-text-stroke:0.1px #b4b4b4">0</div><div class="a" style="left:17px;top:-11.62px;width:2px;height:1px;background:#5a5a5a"></div><div class="a" style="left:17px;top:-4.78px;width:2px;height:1px;background:#5a5a5a"></div><div class="a" style="left:17px;top:2.07px;width:2px;height:1px;background:#5a5a5a"></div><div class="a" style="left:17px;top:8.92px;width:2px;height:1px;background:#5a5a5a"></div><div class="a" style="left:0px;top:15.77px;width:19px;height:1px;background:#5c5c5c"></div><div class="t" style="left:7px;top:17.17px;font-size:7.8px;color:#b4b4b4;-webkit-text-stroke:0.1px #b4b4b4">5</div><div class="t" style="left:7px;top:25.17px;font-size:7.8px;color:#b4b4b4;-webkit-text-stroke:0.1px #b4b4b4">0</div><div class="a" style="left:17px;top:22.61px;width:2px;height:1px;background:#5a5a5a"></div><div class="a" style="left:17px;top:29.46px;width:2px;height:1px;background:#5a5a5a"></div><div class="a" style="left:17px;top:36.31px;width:2px;height:1px;background:#5a5a5a"></div><div class="a" style="left:17px;top:43.15px;width:2px;height:1px;background:#5a5a5a"></div><div class="a" style="left:0px;top:50.00px;width:19px;height:1px;background:#5c5c5c"></div><div class="t" style="left:7px;top:51.40px;font-size:7.8px;color:#b4b4b4;-webkit-text-stroke:0.1px #b4b4b4">0</div><div class="a" style="left:17px;top:56.85px;width:2px;height:1px;background:#5a5a5a"></div><div class="a" style="left:17px;top:63.69px;width:2px;height:1px;background:#5a5a5a"></div><div class="a" style="left:17px;top:70.54px;width:2px;height:1px;background:#5a5a5a"></div><div class="a" style="left:17px;top:77.39px;width:2px;height:1px;background:#5a5a5a"></div><div class="a" style="left:0px;top:84.24px;width:19px;height:1px;background:#5c5c5c"></div><div class="t" style="left:7px;top:85.64px;font-size:7.8px;color:#b4b4b4;-webkit-text-stroke:0.1px #b4b4b4">5</div><div class="t" style="left:7px;top:93.64px;font-size:7.8px;color:#b4b4b4;-webkit-text-stroke:0.1px #b4b4b4">0</div><div class="a" style="left:17px;top:91.08px;width:2px;height:1px;background:#5a5a5a"></div><div class="a" style="left:17px;top:97.93px;width:2px;height:1px;background:#5a5a5a"></div><div class="a" style="left:17px;top:104.78px;width:2px;height:1px;background:#5a5a5a"></div><div class="a" style="left:17px;top:111.62px;width:2px;height:1px;background:#5a5a5a"></div><div class="a" style="left:0px;top:118.47px;width:19px;height:1px;background:#5c5c5c"></div><div class="t" style="left:7px;top:119.87px;font-size:7.8px;color:#b4b4b4;-webkit-text-stroke:0.1px #b4b4b4">1</div><div class="t" style="left:7px;top:127.87px;font-size:7.8px;color:#b4b4b4;-webkit-text-stroke:0.1px #b4b4b4">0</div><div class="t" style="left:7px;top:135.87px;font-size:7.8px;color:#b4b4b4;-webkit-text-stroke:0.1px #b4b4b4">0</div><div class="a" style="left:17px;top:125.32px;width:2px;height:1px;background:#5a5a5a"></div><div class="a" style="left:17px;top:132.16px;width:2px;height:1px;background:#5a5a5a"></div><div class="a" style="left:17px;top:139.01px;width:2px;height:1px;background:#5a5a5a"></div><div class="a" style="left:17px;top:145.86px;width:2px;height:1px;background:#5a5a5a"></div><div class="a" style="left:0px;top:152.70px;width:19px;height:1px;background:#5c5c5c"></div><div class="t" style="left:7px;top:154.10px;font-size:7.8px;color:#b4b4b4;-webkit-text-stroke:0.1px #b4b4b4">1</div><div class="t" style="left:7px;top:162.10px;font-size:7.8px;color:#b4b4b4;-webkit-text-stroke:0.1px #b4b4b4">5</div><div class="t" style="left:7px;top:170.10px;font-size:7.8px;color:#b4b4b4;-webkit-text-stroke:0.1px #b4b4b4">0</div><div class="a" style="left:17px;top:159.55px;width:2px;height:1px;background:#5a5a5a"></div><div class="a" style="left:17px;top:166.40px;width:2px;height:1px;background:#5a5a5a"></div><div class="a" style="left:17px;top:173.25px;width:2px;height:1px;background:#5a5a5a"></div><div class="a" style="left:17px;top:180.09px;width:2px;height:1px;background:#5a5a5a"></div><div class="a" style="left:0px;top:186.94px;width:19px;height:1px;background:#5c5c5c"></div><div class="t" style="left:7px;top:188.34px;font-size:7.8px;color:#b4b4b4;-webkit-text-stroke:0.1px #b4b4b4">2</div><div class="t" style="left:7px;top:196.34px;font-size:7.8px;color:#b4b4b4;-webkit-text-stroke:0.1px #b4b4b4">0</div><div class="t" style="left:7px;top:204.34px;font-size:7.8px;color:#b4b4b4;-webkit-text-stroke:0.1px #b4b4b4">0</div><div class="a" style="left:17px;top:193.79px;width:2px;height:1px;background:#5a5a5a"></div><div class="a" style="left:17px;top:200.63px;width:2px;height:1px;background:#5a5a5a"></div><div class="a" style="left:17px;top:207.48px;width:2px;height:1px;background:#5a5a5a"></div><div class="a" style="left:17px;top:214.33px;width:2px;height:1px;background:#5a5a5a"></div><div class="a" style="left:0px;top:221.18px;width:19px;height:1px;background:#5c5c5c"></div><div class="t" style="left:7px;top:222.57px;font-size:7.8px;color:#b4b4b4;-webkit-text-stroke:0.1px #b4b4b4">2</div><div class="t" style="left:7px;top:230.57px;font-size:7.8px;color:#b4b4b4;-webkit-text-stroke:0.1px #b4b4b4">5</div><div class="t" style="left:7px;top:238.57px;font-size:7.8px;color:#b4b4b4;-webkit-text-stroke:0.1px #b4b4b4">0</div><div class="a" style="left:17px;top:228.02px;width:2px;height:1px;background:#5a5a5a"></div><div class="a" style="left:17px;top:234.87px;width:2px;height:1px;background:#5a5a5a"></div><div class="a" style="left:17px;top:241.72px;width:2px;height:1px;background:#5a5a5a"></div><div class="a" style="left:17px;top:248.56px;width:2px;height:1px;background:#5a5a5a"></div><div class="a" style="left:0px;top:255.41px;width:19px;height:1px;background:#5c5c5c"></div><div class="t" style="left:7px;top:256.81px;font-size:7.8px;color:#b4b4b4;-webkit-text-stroke:0.1px #b4b4b4">3</div><div class="t" style="left:7px;top:264.81px;font-size:7.8px;color:#b4b4b4;-webkit-text-stroke:0.1px #b4b4b4">0</div><div class="t" style="left:7px;top:272.81px;font-size:7.8px;color:#b4b4b4;-webkit-text-stroke:0.1px #b4b4b4">0</div><div class="a" style="left:17px;top:262.26px;width:2px;height:1px;background:#5a5a5a"></div><div class="a" style="left:17px;top:269.10px;width:2px;height:1px;background:#5a5a5a"></div><div class="a" style="left:17px;top:275.95px;width:2px;height:1px;background:#5a5a5a"></div><div class="a" style="left:17px;top:282.80px;width:2px;height:1px;background:#5a5a5a"></div><div class="a" style="left:0px;top:289.64px;width:19px;height:1px;background:#5c5c5c"></div><div class="t" style="left:7px;top:291.04px;font-size:7.8px;color:#b4b4b4;-webkit-text-stroke:0.1px #b4b4b4">3</div><div class="t" style="left:7px;top:299.04px;font-size:7.8px;color:#b4b4b4;-webkit-text-stroke:0.1px #b4b4b4">5</div><div class="t" style="left:7px;top:307.04px;font-size:7.8px;color:#b4b4b4;-webkit-text-stroke:0.1px #b4b4b4">0</div><div class="a" style="left:17px;top:296.49px;width:2px;height:1px;background:#5a5a5a"></div><div class="a" style="left:17px;top:303.34px;width:2px;height:1px;background:#5a5a5a"></div><div class="a" style="left:17px;top:310.19px;width:2px;height:1px;background:#5a5a5a"></div><div class="a" style="left:17px;top:317.03px;width:2px;height:1px;background:#5a5a5a"></div><div class="a" style="left:0px;top:323.88px;width:19px;height:1px;background:#5c5c5c"></div><div class="t" style="left:7px;top:325.28px;font-size:7.8px;color:#b4b4b4;-webkit-text-stroke:0.1px #b4b4b4">4</div><div class="t" style="left:7px;top:333.28px;font-size:7.8px;color:#b4b4b4;-webkit-text-stroke:0.1px #b4b4b4">0</div><div class="t" style="left:7px;top:341.28px;font-size:7.8px;color:#b4b4b4;-webkit-text-stroke:0.1px #b4b4b4">0</div><div class="a" style="left:17px;top:330.73px;width:2px;height:1px;background:#5a5a5a"></div><div class="a" style="left:17px;top:337.57px;width:2px;height:1px;background:#5a5a5a"></div><div class="a" style="left:17px;top:344.42px;width:2px;height:1px;background:#5a5a5a"></div><div class="a" style="left:17px;top:351.27px;width:2px;height:1px;background:#5a5a5a"></div><div class="a" style="left:0px;top:358.12px;width:19px;height:1px;background:#5c5c5c"></div><div class="t" style="left:7px;top:359.51px;font-size:7.8px;color:#b4b4b4;-webkit-text-stroke:0.1px #b4b4b4">4</div><div class="t" style="left:7px;top:367.51px;font-size:7.8px;color:#b4b4b4;-webkit-text-stroke:0.1px #b4b4b4">5</div><div class="t" style="left:7px;top:375.51px;font-size:7.8px;color:#b4b4b4;-webkit-text-stroke:0.1px #b4b4b4">0</div><div class="a" style="left:17px;top:364.96px;width:2px;height:1px;background:#5a5a5a"></div><div class="a" style="left:17px;top:371.81px;width:2px;height:1px;background:#5a5a5a"></div><div class="a" style="left:17px;top:378.66px;width:2px;height:1px;background:#5a5a5a"></div><div class="a" style="left:17px;top:385.50px;width:2px;height:1px;background:#5a5a5a"></div><div class="a" style="left:0px;top:392.35px;width:19px;height:1px;background:#5c5c5c"></div><div class="t" style="left:7px;top:393.75px;font-size:7.8px;color:#b4b4b4;-webkit-text-stroke:0.1px #b4b4b4">5</div><div class="t" style="left:7px;top:401.75px;font-size:7.8px;color:#b4b4b4;-webkit-text-stroke:0.1px #b4b4b4">0</div><div class="t" style="left:7px;top:409.75px;font-size:7.8px;color:#b4b4b4;-webkit-text-stroke:0.1px #b4b4b4">0</div><div class="a" style="left:17px;top:399.20px;width:2px;height:1px;background:#5a5a5a"></div><div class="a" style="left:17px;top:406.04px;width:2px;height:1px;background:#5a5a5a"></div><div class="a" style="left:17px;top:412.89px;width:2px;height:1px;background:#5a5a5a"></div><div class="a" style="left:17px;top:419.74px;width:2px;height:1px;background:#5a5a5a"></div><div class="a" style="left:0px;top:426.59px;width:19px;height:1px;background:#5c5c5c"></div><div class="t" style="left:7px;top:427.99px;font-size:7.8px;color:#b4b4b4;-webkit-text-stroke:0.1px #b4b4b4">5</div><div class="t" style="left:7px;top:435.99px;font-size:7.8px;color:#b4b4b4;-webkit-text-stroke:0.1px #b4b4b4">5</div><div class="t" style="left:7px;top:443.99px;font-size:7.8px;color:#b4b4b4;-webkit-text-stroke:0.1px #b4b4b4">0</div><div class="a" style="left:17px;top:433.43px;width:2px;height:1px;background:#5a5a5a"></div><div class="a" style="left:17px;top:440.28px;width:2px;height:1px;background:#5a5a5a"></div><div class="a" style="left:17px;top:447.13px;width:2px;height:1px;background:#5a5a5a"></div><div class="a" style="left:17px;top:453.97px;width:2px;height:1px;background:#5a5a5a"></div><div class="a" style="left:0px;top:460.82px;width:19px;height:1px;background:#5c5c5c"></div><div class="t" style="left:7px;top:462.22px;font-size:7.8px;color:#b4b4b4;-webkit-text-stroke:0.1px #b4b4b4">6</div><div class="t" style="left:7px;top:470.22px;font-size:7.8px;color:#b4b4b4;-webkit-text-stroke:0.1px #b4b4b4">0</div><div class="t" style="left:7px;top:478.22px;font-size:7.8px;color:#b4b4b4;-webkit-text-stroke:0.1px #b4b4b4">0</div><div class="a" style="left:17px;top:467.67px;width:2px;height:1px;background:#5a5a5a"></div><div class="a" style="left:17px;top:474.51px;width:2px;height:1px;background:#5a5a5a"></div><div class="a" style="left:17px;top:481.36px;width:2px;height:1px;background:#5a5a5a"></div><div class="a" style="left:17px;top:488.21px;width:2px;height:1px;background:#5a5a5a"></div><div class="a" style="left:0px;top:495.06px;width:19px;height:1px;background:#5c5c5c"></div><div class="t" style="left:7px;top:496.46px;font-size:7.8px;color:#b4b4b4;-webkit-text-stroke:0.1px #b4b4b4">6</div><div class="t" style="left:7px;top:504.46px;font-size:7.8px;color:#b4b4b4;-webkit-text-stroke:0.1px #b4b4b4">5</div><div class="t" style="left:7px;top:512.46px;font-size:7.8px;color:#b4b4b4;-webkit-text-stroke:0.1px #b4b4b4">0</div><div class="a" style="left:17px;top:501.90px;width:2px;height:1px;background:#5a5a5a"></div><div class="a" style="left:17px;top:508.75px;width:2px;height:1px;background:#5a5a5a"></div><div class="a" style="left:17px;top:515.60px;width:2px;height:1px;background:#5a5a5a"></div><div class="a" style="left:17px;top:522.44px;width:2px;height:1px;background:#5a5a5a"></div><div class="a" style="left:0px;top:529.29px;width:19px;height:1px;background:#5c5c5c"></div><div class="t" style="left:7px;top:530.69px;font-size:7.8px;color:#b4b4b4;-webkit-text-stroke:0.1px #b4b4b4">7</div><div class="t" style="left:7px;top:538.69px;font-size:7.8px;color:#b4b4b4;-webkit-text-stroke:0.1px #b4b4b4">0</div><div class="t" style="left:7px;top:546.69px;font-size:7.8px;color:#b4b4b4;-webkit-text-stroke:0.1px #b4b4b4">0</div><div class="a" style="left:17px;top:536.14px;width:2px;height:1px;background:#5a5a5a"></div><div class="a" style="left:17px;top:542.98px;width:2px;height:1px;background:#5a5a5a"></div><div class="a" style="left:17px;top:549.83px;width:2px;height:1px;background:#5a5a5a"></div><div class="a" style="left:17px;top:556.68px;width:2px;height:1px;background:#5a5a5a"></div><div class="a" style="left:0px;top:563.52px;width:19px;height:1px;background:#5c5c5c"></div><div class="t" style="left:7px;top:564.92px;font-size:7.8px;color:#b4b4b4;-webkit-text-stroke:0.1px #b4b4b4">7</div><div class="t" style="left:7px;top:572.92px;font-size:7.8px;color:#b4b4b4;-webkit-text-stroke:0.1px #b4b4b4">5</div><div class="t" style="left:7px;top:580.92px;font-size:7.8px;color:#b4b4b4;-webkit-text-stroke:0.1px #b4b4b4">0</div><div class="a" style="left:17px;top:570.37px;width:2px;height:1px;background:#5a5a5a"></div><div class="a" style="left:17px;top:577.22px;width:2px;height:1px;background:#5a5a5a"></div><div class="a" style="left:17px;top:584.07px;width:2px;height:1px;background:#5a5a5a"></div><div class="a" style="left:17px;top:590.91px;width:2px;height:1px;background:#5a5a5a"></div><div class="a" style="left:0px;top:597.76px;width:19px;height:1px;background:#5c5c5c"></div><div class="t" style="left:7px;top:599.16px;font-size:7.8px;color:#b4b4b4;-webkit-text-stroke:0.1px #b4b4b4">8</div><div class="t" style="left:7px;top:607.16px;font-size:7.8px;color:#b4b4b4;-webkit-text-stroke:0.1px #b4b4b4">0</div><div class="t" style="left:7px;top:615.16px;font-size:7.8px;color:#b4b4b4;-webkit-text-stroke:0.1px #b4b4b4">0</div><div class="a" style="left:17px;top:604.61px;width:2px;height:1px;background:#5a5a5a"></div><div class="a" style="left:17px;top:611.45px;width:2px;height:1px;background:#5a5a5a"></div><div class="a" style="left:17px;top:618.30px;width:2px;height:1px;background:#5a5a5a"></div><div class="a" style="left:17px;top:625.15px;width:2px;height:1px;background:#5a5a5a"></div><div class="a" style="left:0px;top:632.00px;width:19px;height:1px;background:#5c5c5c"></div><div class="t" style="left:7px;top:633.39px;font-size:7.8px;color:#b4b4b4;-webkit-text-stroke:0.1px #b4b4b4">8</div><div class="t" style="left:7px;top:641.39px;font-size:7.8px;color:#b4b4b4;-webkit-text-stroke:0.1px #b4b4b4">5</div><div class="t" style="left:7px;top:649.39px;font-size:7.8px;color:#b4b4b4;-webkit-text-stroke:0.1px #b4b4b4">0</div><div class="a" style="left:17px;top:638.84px;width:2px;height:1px;background:#5a5a5a"></div><div class="a" style="left:17px;top:645.69px;width:2px;height:1px;background:#5a5a5a"></div><div class="a" style="left:17px;top:652.54px;width:2px;height:1px;background:#5a5a5a"></div><div class="a" style="left:17px;top:659.38px;width:2px;height:1px;background:#5a5a5a"></div><div class="a" style="left:0px;top:666.23px;width:19px;height:1px;background:#5c5c5c"></div><div class="t" style="left:7px;top:667.63px;font-size:7.8px;color:#b4b4b4;-webkit-text-stroke:0.1px #b4b4b4">9</div><div class="t" style="left:7px;top:675.63px;font-size:7.8px;color:#b4b4b4;-webkit-text-stroke:0.1px #b4b4b4">0</div><div class="t" style="left:7px;top:683.63px;font-size:7.8px;color:#b4b4b4;-webkit-text-stroke:0.1px #b4b4b4">0</div><div class="a" style="left:17px;top:673.08px;width:2px;height:1px;background:#5a5a5a"></div><div class="a" style="left:17px;top:679.92px;width:2px;height:1px;background:#5a5a5a"></div><div class="a" style="left:17px;top:686.77px;width:2px;height:1px;background:#5a5a5a"></div><div class="a" style="left:17px;top:693.62px;width:2px;height:1px;background:#5a5a5a"></div><div class="a" style="left:0px;top:700.47px;width:19px;height:1px;background:#5c5c5c"></div><div class="t" style="left:7px;top:701.87px;font-size:7.8px;color:#b4b4b4;-webkit-text-stroke:0.1px #b4b4b4">9</div><div class="t" style="left:7px;top:709.87px;font-size:7.8px;color:#b4b4b4;-webkit-text-stroke:0.1px #b4b4b4">5</div><div class="t" style="left:7px;top:717.87px;font-size:7.8px;color:#b4b4b4;-webkit-text-stroke:0.1px #b4b4b4">0</div><div class="a" style="left:17px;top:707.31px;width:2px;height:1px;background:#5a5a5a"></div><div class="a" style="left:17px;top:714.16px;width:2px;height:1px;background:#5a5a5a"></div><div class="a" style="left:17px;top:721.01px;width:2px;height:1px;background:#5a5a5a"></div><div class="a" style="left:17px;top:727.85px;width:2px;height:1px;background:#5a5a5a"></div><div class="a" style="left:0px;top:734.70px;width:19px;height:1px;background:#5c5c5c"></div><div class="t" style="left:7px;top:736.10px;font-size:7.8px;color:#b4b4b4;-webkit-text-stroke:0.1px #b4b4b4">1</div><div class="t" style="left:7px;top:744.10px;font-size:7.8px;color:#b4b4b4;-webkit-text-stroke:0.1px #b4b4b4">0</div><div class="t" style="left:7px;top:752.10px;font-size:7.8px;color:#b4b4b4;-webkit-text-stroke:0.1px #b4b4b4">0</div><div class="t" style="left:7px;top:760.10px;font-size:7.8px;color:#b4b4b4;-webkit-text-stroke:0.1px #b4b4b4">0</div><div class="a" style="left:17px;top:741.55px;width:2px;height:1px;background:#5a5a5a"></div><div class="a" style="left:17px;top:748.39px;width:2px;height:1px;background:#5a5a5a"></div><div class="a" style="left:17px;top:755.24px;width:2px;height:1px;background:#5a5a5a"></div><div class="a" style="left:17px;top:762.09px;width:2px;height:1px;background:#5a5a5a"></div><div class="a" style="left:0px;top:768.93px;width:19px;height:1px;background:#5c5c5c"></div><div class="t" style="left:7px;top:770.33px;font-size:7.8px;color:#b4b4b4;-webkit-text-stroke:0.1px #b4b4b4">1</div><div class="t" style="left:7px;top:778.33px;font-size:7.8px;color:#b4b4b4;-webkit-text-stroke:0.1px #b4b4b4">0</div><div class="t" style="left:7px;top:786.33px;font-size:7.8px;color:#b4b4b4;-webkit-text-stroke:0.1px #b4b4b4">5</div><div class="t" style="left:7px;top:794.33px;font-size:7.8px;color:#b4b4b4;-webkit-text-stroke:0.1px #b4b4b4">0</div><div class="a" style="left:17px;top:775.78px;width:2px;height:1px;background:#5a5a5a"></div><div class="a" style="left:17px;top:782.63px;width:2px;height:1px;background:#5a5a5a"></div><div class="a" style="left:17px;top:789.48px;width:2px;height:1px;background:#5a5a5a"></div><div class="a" style="left:17px;top:796.32px;width:2px;height:1px;background:#5a5a5a"></div></div>
<div class="a" style="left:39px;top:90px;width:19px;height:20px;background:#4b4b4b;"></div>
<div class="a" style="left:1181px;top:90px;width:17px;height:806px;background:#4a4a4a;"></div>
<div class="a" style="left:1184px;top:335px;width:11px;height:306px;border-radius:6px;background:#6b6b6b"></div>
<div class="a" style="left:39px;top:896px;width:1159px;height:17px;background:#4b4b4b;"></div>
<div class="a" style="left:101px;top:896px;width:192px;height:17px;background:#555555;"></div>
<div class="t" style="left:50px;top:900px;font-size:10px;color:#f0f0f0;font-weight:bold;">131,12%</div>
<div class="t" style="left:123px;top:900px;font-size:11px;color:#dedede;font-weight:normal;letter-spacing:0.1px">1500 px x 1000 px (72 ppi)</div>
<svg style="left:282px;top:899px" width="8" height="12"><path d="M2 1 L6 6 L2 11" stroke="#d6d6d6" stroke-width="1.3" fill="none"/></svg>
<div class="a" style="left:572px;top:899px;width:323px;height:11px;border-radius:6px;background:#6b6b6b"></div>
<div class="a" style="left:1198px;top:59px;width:3px;height:854px;background:#3c3c3c;"></div>
<div class="a" style="left:1201px;top:59px;width:39px;height:854px;background:#535353;"></div>
<div class="a" style="left:1201px;top:59px;width:39px;height:12px;background:#434343;"></div>
<div class="a" style="left:1240px;top:59px;width:3px;height:854px;background:#3c3c3c;"></div>
<div class="a" style="left:1201px;top:113px;width:39px;height:2px;background:#3e3e3e"></div>
<div class="a" style="left:1201px;top:185px;width:39px;height:2px;background:#3e3e3e"></div>
<div class="a" style="left:1201px;top:227.5px;width:39px;height:2px;background:#3e3e3e"></div>
<div class="a" style="left:1201px;top:300px;width:39px;height:2px;background:#3e3e3e"></div>
<div class="a" style="left:1201px;top:372px;width:39px;height:2px;background:#3e3e3e"></div>
<div class="a" style="left:1201px;top:414.6px;width:39px;height:2px;background:#3e3e3e"></div>
<div class="a" style="left:1201px;top:457.3px;width:39px;height:2px;background:#3e3e3e"></div>
<div class="a" style="left:1201px;top:500px;width:39px;height:2px;background:#3e3e3e"></div>
<svg style="left:1200px;top:0" width="42" height="520">
 <g stroke="#474747" stroke-width="3" stroke-dasharray="1 1.1">
  <path d="M10.5 77.5 H31"/><path d="M10.5 120 H31"/><path d="M10.5 192 H31"/><path d="M10.5 235 H31"/>
  <path d="M10.5 307 H31"/><path d="M10.5 378.5 H31"/><path d="M10.5 422 H31"/><path d="M10.5 465 H31"/>
 </g>
 <!-- chevrons << -->
 <path d="M29.5 63 L27.2 65.3 L29.5 67.6 M33.5 63 L31.2 65.3 L33.5 67.6" stroke="#e4e4e4" stroke-width="1.1" fill="none"/>
 <!-- play -->
 <path d="M14 88 L28.5 95.5 L14 103 Z" fill="#e6e6e6"/>
 <!-- brush presets -->
 <g fill="#e6e6e6"><circle cx="11.5" cy="131" r="1.1"/><circle cx="11.5" cy="134.5" r="1.1"/><circle cx="11.5" cy="138" r="1.1"/>
 <rect x="14" y="130.3" width="4.2" height="1.4"/><rect x="14" y="133.8" width="4.2" height="1.4"/><rect x="14" y="137.3" width="4.2" height="1.4"/></g>
 <path d="M22.5 140.5 L30.5 132.5" stroke="#e6e6e6" stroke-width="2.6" stroke-linecap="round"/>
 <path d="M21.5 139.5 C18.5 139.5 16.5 143 16 147 C19.5 146.8 22.5 145 23 142 Z" fill="#e6e6e6"/>
 <!-- brush settings -->
 <path d="M19 162 H21.5" stroke="#e6e6e6" stroke-width="2.4"/>
 <path d="M19.5 162 C17 158.5 12 158.5 8.8 162 C12 165.5 17 165.5 19.5 162 Z" fill="#e6e6e6"/>
 <rect x="21" y="161.5" width="10" height="2" fill="#e6e6e6"/>
 <rect x="12" y="171.3" width="10" height="2" fill="#e6e6e6"/>
 <path d="M22.5 172.3 L30 166.5 C31.5 170 31.5 174.5 30 178 Z" fill="#e6e6e6"/>
 <!-- clone source -->
 <g fill="#e6e6e6"><circle cx="11.5" cy="202" r="1.1"/><circle cx="11.5" cy="205.5" r="1.1"/><circle cx="11.5" cy="209" r="1.1"/>
 <rect x="14" y="201.3" width="4.2" height="1.4"/><rect x="14" y="204.8" width="4.2" height="1.4"/><rect x="14" y="208.3" width="4.2" height="1.4"/>
 <circle cx="23.2" cy="204.2" r="2.8"/><rect x="22" y="205" width="2.4" height="7"/><rect x="16.3" y="211.8" width="13.6" height="4" rx="0.8"/><rect x="17" y="217.2" width="12" height="1.6"/></g>
 <!-- A| -->
 <path d="M14 258.5 L19.7 247.3 L25.4 258.5 M16 254.3 H23.4" stroke="#e9e9e9" stroke-width="1.4" fill="none"/>
 <path d="M27.6 244.5 V261" stroke="#e9e9e9" stroke-width="1"/>
 <!-- pilcrow -->
 <path d="M20.5 276 C16 276 14.8 278 14.8 280.3 C14.8 282.8 16.5 284.5 20.5 284.5 Z" fill="#e9e9e9"/>
 <path d="M20.5 276 H25.8 M21.5 276 V290.8 M24.8 276 V290.8" stroke="#e9e9e9" stroke-width="1.6"/>
 <!-- para styles -->
 <path d="M23 317.5 C19.5 317.5 18.6 319 18.6 321 C18.6 323 19.8 324.5 23 324.5 Z" fill="#e9e9e9"/>
 <path d="M23 317.5 H28 M24 317.5 V330.5 M27 317.5 V330.5" stroke="#e9e9e9" stroke-width="1.5"/>
 <rect x="14.5" y="330.5" width="5.5" height="4.8" fill="#e9e9e9"/>
 <rect x="11.5" y="327.3" width="5" height="4.5" fill="#535353" stroke="#e9e9e9" stroke-width="1"/>
 <!-- char styles -->
 <path d="M19 359 L24 346.2 L29.3 359 M20.6 354.5 H27.5" stroke="#e9e9e9" stroke-width="1.5" fill="none"/>
 <rect x="14.5" y="358.5" width="5.5" height="4.8" fill="#e9e9e9"/>
 <rect x="11.5" y="355.3" width="5" height="4.5" fill="#535353" stroke="#e9e9e9" stroke-width="1"/>
 <!-- cube -->
 <path d="M21.2 388.5 L29.5 393 V402.3 L21.2 406.8 L13 402.3 V393 Z" fill="#7a7a7a" stroke="#e9e9e9" stroke-width="1.4" stroke-linejoin="round"/>
 <path d="M13 393 L21.2 397.5 L29.5 393 M21.2 397.5 V406.8" stroke="#e9e9e9" stroke-width="1.3" fill="none"/>
 <path d="M21.2 397.5 L29.5 393 V402.3 L21.2 406.8 Z" fill="#3d3d3d" stroke="#e9e9e9" stroke-width="1.2" stroke-linejoin="round"/>
 <!-- grid table -->
 <rect x="12.5" y="433" width="17.5" height="14" fill="#eeeeee"/>
 <path d="M14.5 437.3 H28 M14.5 443 H28" stroke="#2e2e2e" stroke-width="1.1" stroke-dasharray="2 1.4"/>
 <path d="M16.8 435 V445.5 M21.2 435 V445.5 M25.6 435 V445.5" stroke="#2e2e2e" stroke-width="1.1" stroke-dasharray="1.6 1.4"/>
 <path d="M18.5 440.2 H24" stroke="#2e2e2e" stroke-width="1.2"/>
 <!-- script A glyphs -->
 <path d="M13.8 490.5 C16.5 490.5 18.5 488 20.5 484 L25 476.3 L27 490.5 M14.2 480.5 C14.5 477.5 18 476.5 20.5 478.5 M19 484.8 H26.2" stroke="#eeeeee" stroke-width="1.6" fill="none" stroke-linecap="round" stroke-linejoin="round"/>
 <path d="M25.5 490.5 H28.8" stroke="#eeeeee" stroke-width="1.5" stroke-linecap="round"/>
</svg>

<!-- right panel dock -->
<div class="a" style="left:1243px;top:59px;width:257px;height:13px;background:#434343"></div>
<svg style="left:1470px;top:55px" width="30" height="20"><path d="M15 8 L17.3 10.3 L15 12.6 M19 8 L21.3 10.3 L19 12.6" stroke="#e4e4e4" stroke-width="1.1" fill="none"/></svg>
<!-- properties panel -->
<div class="a" style="left:1243px;top:72px;width:257px;height:351px;background:#535353"></div>
<div class="a" style="left:1243px;top:72px;width:257px;height:28px;background:#494949"></div>
<div class="a" style="left:1243px;top:100px;width:257px;height:1px;background:#424242"></div>
<div class="a" style="left:1279px;top:72px;width:1px;height:28px;background:#404040"></div>
<div class="a" style="left:1314px;top:72px;width:1px;height:28px;background:#404040"></div>
<div class="a" style="left:1350px;top:72px;width:1px;height:28px;background:#404040"></div>
<div class="a" style="left:1386px;top:72px;width:73px;height:29px;background:#535353"></div>
<div class="a" style="left:1243px;top:72px;width:36px;height:28px;overflow:hidden"><div class="t" style="left:10px;top:8.7px;font-size:11px;font-weight:bold;color:#cfcfcf">Libraries</div></div>
<div class="a" style="left:1280px;top:72px;width:34px;height:28px;overflow:hidden"><div class="t" style="left:8.2px;top:8.7px;font-size:11px;font-weight:bold;color:#cfcfcf">History</div></div>
<div class="a" style="left:1315px;top:72px;width:35px;height:28px;overflow:hidden"><div class="t" style="left:8.5px;top:8.7px;font-size:11px;font-weight:bold;color:#cfcfcf">Navigator</div></div>
<div class="a" style="left:1351px;top:72px;width:35px;height:28px;overflow:hidden"><div class="t" style="left:8.2px;top:8.7px;font-size:11px;font-weight:bold;color:#cfcfcf">Adjustments</div></div>
<div class="t" style="left:1394px;top:80.7px;font-size:11px;font-weight:bold;color:#f4f4f4">Properties</div>
<svg style="left:1480px;top:78px" width="20" height="16"><path d="M3.5 4.5 H14 M3.5 6.5 H14 M3.5 8.5 H14 M3.5 10.5 H14 M3.5 12.5 H14" stroke="#d0d0d0" stroke-width="1"/></svg>
<!-- document row -->
<div class="a" style="left:1255px;top:107.5px;width:22.5px;height:23px;background:#3c3c3c;border:1px solid #4b4b4b;border-radius:2px"></div>
<svg style="left:1250px;top:100px" width="40" height="40"><path d="M10.3 12.5 H17.8 L21.5 16.2 V26.5 H10.3 Z M17.5 12.5 V16.5 H21.5" stroke="#e6e6e6" stroke-width="1.3" fill="none" stroke-linejoin="round"/></svg>
<div class="t" style="left:1283px;top:114px;font-size:11px;letter-spacing:0.1px;color:#e2e2e2">Document</div>
<div class="a" style="left:1243px;top:136px;width:257px;height:1px;background:#444444"></div>
<!-- scroll track -->
<div class="a" style="left:1482px;top:137px;width:16px;height:259px;background:#4c4c4c"></div>
<div class="a" style="left:1486px;top:140px;width:11px;height:140px;border-radius:5.5px;background:#6a6a6a"></div>
<div class="a" style="left:1498px;top:72px;width:2px;height:841px;background:#464646"></div>
<!-- canvas section -->
<svg style="left:1245px;top:140px" width="20" height="20"><path d="M5.6 11.2 L9.8 15.4 L14 11.2" stroke="#dcdcdc" stroke-width="1.2" fill="none"/></svg>
<div class="t" style="left:1265px;top:147.8px;font-size:11px;font-weight:bold;color:#eeeeee">Canvas</div>
<div class="t" style="left:1295px;top:171.8px;font-size:11px;letter-spacing:0.1px;color:#e0e0e0">W</div>
<div class="a" style="left:1311px;top:169.5px;width:55px;height:15px;background:#3f3f3f;border:1px solid #4c4c4c"></div>
<div class="t" style="left:1314.5px;top:171.8px;font-size:11px;letter-spacing:0.1px;color:#f2f2f2">1500 px</div>
<div class="t" style="left:1379.5px;top:171.8px;font-size:11px;letter-spacing:0.1px;color:#e0e0e0">X</div>
<div class="a" style="left:1392.5px;top:169.5px;width:55px;height:15px;background:#4f4f4f;border:1px solid #575757"></div>
<div class="t" style="left:1396px;top:171.8px;font-size:11px;letter-spacing:0.1px;color:#686868">0 px</div>
<div class="t" style="left:1297.5px;top:196.8px;font-size:11px;letter-spacing:0.1px;color:#e0e0e0">H</div>
<div class="a" style="left:1311px;top:194.5px;width:55px;height:15.5px;background:#3f3f3f;border:1px solid #4c4c4c"></div>
<div class="t" style="left:1314.5px;top:196.8px;font-size:11px;letter-spacing:0.1px;color:#f2f2f2">1000 px</div>
<div class="t" style="left:1379.5px;top:196.8px;font-size:11px;letter-spacing:0.1px;color:#e0e0e0">Y</div>
<div class="a" style="left:1392.5px;top:194.5px;width:55px;height:15.5px;background:#4f4f4f;border:1px solid #575757"></div>
<div class="t" style="left:1396px;top:196.8px;font-size:11px;letter-spacing:0.1px;color:#686868">0 px</div>
<svg style="left:1255px;top:175px" width="30" height="30"><rect x="8.8" y="7.5" width="7" height="8.5" rx="3.5" stroke="#e0e0e0" stroke-width="1.3" fill="none"/><rect x="8.8" y="13.5" width="7" height="8.5" rx="3.5" stroke="#e0e0e0" stroke-width="1.3" fill="none"/></svg>
<!-- orientation -->
<svg style="left:1310px;top:218px" width="60" height="34">
 <rect x="6.8" y="8.5" width="15" height="17.5" stroke="#e6e6e6" stroke-width="1.3" fill="none"/>
 <circle cx="14.3" cy="13.5" r="1.9" fill="#e6e6e6"/>
 <path d="M10.5 26 V19.5 C10.5 17 18 17 18 19.5 V26 Z" fill="#e6e6e6"/>
 <rect x="29.5" y="4" width="24.5" height="25.5" rx="2" fill="#393939" stroke="#474747" stroke-width="1"/>
 <rect x="33.5" y="10.5" width="16.5" height="12.8" stroke="#e6e6e6" stroke-width="1.3" fill="none"/>
 <circle cx="41.8" cy="14" r="1.9" fill="#e6e6e6"/>
 <path d="M38.3 23.3 V19.8 C38.3 17.8 45.3 17.8 45.3 19.8 V23.3 Z" fill="#e6e6e6"/>
</svg>
<div class="t" style="left:1311px;top:260.5px;font-size:11px;letter-spacing:0.1px;color:#e2e2e2">Resolution: 72 pixels/inch</div>
<!-- mode -->
<div class="t" style="left:1277px;top:288px;font-size:11px;letter-spacing:0.1px;color:#d6d6d6">Mode</div>
<div class="a" style="left:1311.5px;top:283.5px;width:136px;height:19px;background:#474747;border:1px solid #5c5c5c;border-radius:3px"></div>
<div class="t" style="left:1319px;top:288px;font-size:11px;letter-spacing:0.1px;color:#f0f0f0">RGB Color</div>
<div class="a" style="left:1311.5px;top:310.5px;width:136px;height:19px;background:#474747;border:1px solid #5c5c5c;border-radius:3px"></div>
<div class="t" style="left:1319px;top:315px;font-size:11px;letter-spacing:0.1px;color:#f0f0f0">8 Bits/Channel</div>
<div class="t" style="left:1291px;top:345.5px;font-size:11px;letter-spacing:0.1px;color:#d6d6d6">Fill</div>
<div class="a" style="left:1311px;top:341.3px;width:18px;height:18px;background:#ffffff;border:1px solid #3c3c3c;border-radius:1px"></div>
<div class="a" style="left:1334.5px;top:341px;width:113px;height:19px;background:#474747;border:1px solid #5c5c5c;border-radius:3px"></div>
<div class="t" style="left:1341.5px;top:345.5px;font-size:11px;letter-spacing:0.1px;color:#f0f0f0">White</div>
<svg style="left:1430px;top:280px" width="20" height="90">
 <path d="M7 12.3 L10 15.3 L13 12.3 M7 39.3 L10 42.3 L13 39.3 M7 69.3 L10 72.3 L13 69.3" stroke="#e6e6e6" stroke-width="1.3" fill="none"/>
</svg>
<div class="a" style="left:1243px;top:371px;width:240px;height:1px;background:#474747"></div>
<svg style="left:1245px;top:375px" width="20" height="20"><path d="M5.6 11.2 L9.8 15.4 L14 11.2" stroke="#dcdcdc" stroke-width="1.2" fill="none"/></svg>
<div class="t" style="left:1265px;top:382.5px;font-size:11px;font-weight:bold;color:#eeeeee">Rulers &amp; Grids</div>
<!-- split -->
<div class="a" style="left:1243px;top:423px;width:257px;height:2.5px;background:#3c3c3c"></div>
<!-- layers panel -->
<div class="a" style="left:1243px;top:425.5px;width:255px;height:487px;background:#535353"></div>
<div class="a" style="left:1243px;top:425.5px;width:255px;height:30px;background:#494949"></div>
<div class="a" style="left:1243px;top:455px;width:255px;height:1px;background:#424242"></div>
<div class="a" style="left:1297px;top:425.5px;width:54px;height:30.5px;background:#535353"></div>
<div class="a" style="left:1413.3px;top:425.5px;width:1px;height:30px;background:#404040"></div>
<div class="a" style="left:1459px;top:425.5px;width:1px;height:30px;background:#404040"></div>
<div class="t" style="left:1252.5px;top:434.7px;font-size:11px;font-weight:bold;color:#cfcfcf">History</div>
<div class="t" style="left:1305.5px;top:434.7px;font-size:11px;font-weight:bold;color:#f4f4f4">Layers</div>
<div class="t" style="left:1360px;top:434.7px;font-size:11px;font-weight:bold;color:#cfcfcf">Channels</div>
<div class="t" style="left:1422.5px;top:434.7px;font-size:11px;font-weight:bold;color:#cfcfcf">Paths</div>
<svg style="left:1480px;top:432px" width="20" height="16"><path d="M3.5 4.5 H14 M3.5 6.5 H14 M3.5 8.5 H14 M3.5 10.5 H14 M3.5 12.5 H14" stroke="#d0d0d0" stroke-width="1"/></svg>
<!-- kind row -->
<div class="a" style="left:1247.5px;top:464.5px;width:91px;height:19px;background:#4c4c4c;border:1px solid #595959;border-radius:2px"></div>
<svg style="left:1250px;top:462px" width="95" height="24">
 <circle cx="10.6" cy="11" r="3.7" stroke="#a4a4a4" stroke-width="1.3" fill="none"/>
 <path d="M13.3 13.7 L16 16.4" stroke="#a4a4a4" stroke-width="1.5" stroke-linecap="round"/>
 <path d="M81 10.5 L83.5 13 L86 10.5" stroke="#8a8a8a" stroke-width="1" fill="none"/>
</svg>
<div class="t" style="left:1269px;top:469px;font-size:11px;letter-spacing:0.1px;color:#a2a2a2">Kind</div>
<svg style="left:1340px;top:460px" width="150" height="30">
 <rect x="10.5" y="9.5" width="12" height="9.5" stroke="#b8b8b8" stroke-width="1.2" fill="none"/>
 <path d="M12.5 17.5 L15 14 L16.5 15.5 L18 13.5 L20.8 17.5 Z" fill="#b8b8b8"/>
 <circle cx="41.5" cy="14" r="5.2" stroke="#b8b8b8" stroke-width="1.3" fill="none"/>
 <path d="M45.2 10.3 A5.2 5.2 0 0 1 37.8 17.7 Z" fill="#b8b8b8"/>
 <path d="M61 11.5 V9 H71.5 V11.5 M66.2 9 V19.5 M63.3 19.5 H69.2" stroke="#b8b8b8" stroke-width="1.4" fill="none"/>
 <rect x="87.5" y="9" width="10" height="10" stroke="#b8b8b8" stroke-width="1.2" fill="none"/>
 <g fill="#535353" stroke="#b8b8b8" stroke-width="1"><circle cx="87.5" cy="9" r="1.5"/><circle cx="97.5" cy="9" r="1.5"/><circle cx="87.5" cy="19" r="1.5"/><circle cx="97.5" cy="19" r="1.5"/></g>
 <path d="M116 8.5 H120.5 L123.5 11.5 V19.5 H116 Z" stroke="#b8b8b8" stroke-width="1.2" fill="none"/>
 <rect x="112" y="14" width="6" height="6" fill="#b8b8b8"/>
 <rect x="136" y="10" width="7" height="12" rx="3.5" fill="#474747"/>
 <circle cx="139.5" cy="10.5" r="3.6" fill="#9c9c9c"/>
</svg>
<div class="a" style="left:1243px;top:487.5px;width:255px;height:1px;background:#474747"></div>
<!-- blend row -->
<div class="a" style="left:1247.5px;top:494px;width:135px;height:18.5px;background:#4c4c4c;border:1px solid #595959;border-radius:2px"></div>
<div class="t" style="left:1255px;top:498.5px;font-size:11px;letter-spacing:0.1px;color:#a2a2a2">Normal</div>
<svg style="left:1365px;top:494px" width="20" height="20"><path d="M6.3 9.8 L8.8 12.3 L11.3 9.8" stroke="#8a8a8a" stroke-width="1" fill="none"/></svg>
<div class="t" style="left:1387px;top:498.5px;font-size:11px;letter-spacing:0.1px;color:#a2a2a2">Opacity:</div>
<div class="a" style="left:1431.5px;top:494px;width:53px;height:18.5px;background:#4c4c4c;border:1px solid #595959;border-radius:2px"></div>
<div class="a" style="left:1469.5px;top:495px;width:1px;height:16.5px;background:#595959"></div>
<div class="t" style="left:1436px;top:498.5px;font-size:11px;letter-spacing:0.1px;color:#7e7e7e">100%</div>
<svg style="left:1467px;top:494px" width="20" height="20"><path d="M7.5 10 L10 12.5 L12.5 10" stroke="#8a8a8a" stroke-width="1" fill="none"/></svg>
<div class="a" style="left:1243px;top:517px;width:255px;height:1px;background:#474747"></div>
<!-- lock row -->
<div class="t" style="left:1248px;top:528px;font-size:11px;letter-spacing:0.1px;color:#a2a2a2">Lock:</div>
<svg style="left:1280px;top:520px" width="110" height="26">
 <rect x="2" y="6" width="12" height="12" rx="1" fill="#b4b4b4"/>
 <g fill="#3c3c3c"><rect x="6" y="7" width="4" height="3.3"/><rect x="3" y="10.3" width="3" height="3.4"/><rect x="10" y="10.3" width="3" height="3.4"/><rect x="6" y="13.7" width="4" height="3.3"/></g>
 <path d="M30.5 12.5 L37.3 5.2" stroke="#b4b4b4" stroke-width="2.2" stroke-linecap="round"/>
 <path d="M29.8 11.8 C27.2 11.6 25.5 14.5 24.2 19.5 C28.2 18.8 31 17 31.5 13.8 Z" fill="#b4b4b4"/>
 <path d="M53.3 7 V17 M48.3 12 H58.3" stroke="#b4b4b4" stroke-width="1.3"/>
 <path d="M53.3 4.8 L56.3 8 H50.3 Z M53.3 19.2 L56.3 16 H50.3 Z M46 12 L49.3 9 V15 Z M60.6 12 L57.3 9 V15 Z" fill="#b4b4b4"/>
 <path d="M72 8.5 V17 H82.5 V12 L79 8.5 Z" stroke="#b4b4b4" stroke-width="1.3" fill="none" stroke-linejoin="round"/>
 <path d="M79 8.5 L82.5 12 H79 Z" fill="#b4b4b4"/>
 <path d="M69.5 8.5 H71.3 M72 5.5 V7.5 M72 17.8 V19.8 M69.5 17 H71.3 M83.2 17 H85.2 M82.5 17.8 V19.8 M84 6 L85 7" stroke="#b4b4b4" stroke-width="1.1"/>
 <rect x="94.5" y="11" width="10" height="8" rx="1" fill="#b4b4b4"/>
 <path d="M96.5 11.5 V9.3 C96.5 6 102.5 6 102.5 9.3 V11.5" stroke="#b4b4b4" stroke-width="1.5" fill="none"/>
 <circle cx="99.5" cy="15" r="1" fill="#535353"/>
</svg>
<div class="t" style="left:1411px;top:528px;font-size:11px;letter-spacing:0.1px;color:#a2a2a2">Fill:</div>
<div class="a" style="left:1431.5px;top:523.3px;width:53px;height:18.5px;background:#4c4c4c;border:1px solid #595959;border-radius:2px"></div>
<div class="a" style="left:1469.5px;top:524.3px;width:1px;height:16.5px;background:#595959"></div>
<div class="t" style="left:1436px;top:528px;font-size:11px;letter-spacing:0.1px;color:#7e7e7e">100%</div>
<svg style="left:1467px;top:523px" width="20" height="20"><path d="M7.5 10 L10 12.5 L12.5 10" stroke="#8a8a8a" stroke-width="1" fill="none"/></svg>
<div class="a" style="left:1243px;top:547px;width:255px;height:1px;background:#474747"></div>
<!-- layer list -->
<div class="a" style="left:1243px;top:548px;width:255px;height:339px;background:#4e4e4e"></div>
<div class="a" style="left:1243px;top:548px;width:32px;height:34px;background:#535353"></div>
<div class="a" style="left:1275px;top:548px;width:208px;height:34px;background:#686868"></div>
<svg style="left:1248px;top:556px" width="24" height="20">
 <path d="M4.3 10 C6.5 6.3 8.5 5.3 10.7 5.3 C12.9 5.3 14.9 6.3 17.1 10 C14.9 13.7 12.9 14.7 10.7 14.7 C8.5 14.7 6.5 13.7 4.3 10 Z" fill="#f0f0f0"/>
 <circle cx="10.7" cy="10" r="2.6" fill="#3a3a3a"/>
 <circle cx="11.4" cy="9.3" r="0.8" fill="#f0f0f0"/>
</svg>
<div class="a" style="left:1278.5px;top:554.3px;width:33.5px;height:22.5px;background:#ffffff;border:1px solid #2e2e2e;border-radius:1px"></div>
<div class="t" style="left:1320px;top:560px;font-size:11px;letter-spacing:0.1px;color:#f4f4f4">Background</div>
<svg style="left:1450px;top:555px" width="20" height="20">
 <rect x="5.6" y="9.3" width="10" height="7.5" rx="1" stroke="#ececec" stroke-width="1.2" fill="none"/>
 <path d="M7.6 9.3 V7 C7.6 3.8 13.6 3.8 13.6 7 V9.3" stroke="#ececec" stroke-width="1.2" fill="none"/>
 <circle cx="10.6" cy="13" r="1" fill="#ececec"/>
</svg>
<!-- layers footer -->
<div class="a" style="left:1243px;top:887px;width:255px;height:1px;background:#424242"></div>
<div class="a" style="left:1243px;top:888px;width:255px;height:24px;background:#535353"></div>
<svg style="left:1280px;top:886px" width="200" height="26">
 <g stroke="#a8a8a8" stroke-width="1.5" fill="none"><rect x="8.5" y="10.5" width="7.5" height="6" rx="3"/><rect x="13" y="10.5" width="7.5" height="6" rx="3"/></g>
 <path d="M12 13.5 H17" stroke="#a8a8a8" stroke-width="1.3"/>
 <text x="37" y="19.5" font-family="Liberation Serif" font-style="italic" font-size="14" fill="#a8a8a8">fx</text>
 <rect x="64.5" y="9" width="13" height="10" fill="#e6e6e6"/>
 <circle cx="71" cy="14" r="3" fill="#3c3c3c"/>
 <circle cx="99.7" cy="14" r="5.3" stroke="#e6e6e6" stroke-width="1.3" fill="none"/>
 <path d="M103.5 10.2 A5.3 5.3 0 0 1 95.9 17.8 Z" fill="#e6e6e6"/>
 <path d="M101.5 22 L103.3 24 L105.1 22 Z" fill="#e6e6e6"/>
 <path d="M121.3 9.5 H125 L126 10.5 H133.5 V19.5 H121.3 Z" fill="#e0e0e0"/>
 <rect x="149.6" y="8.5" width="11.5" height="12" stroke="#e6e6e6" stroke-width="1.3" fill="none"/>
 <path d="M155.3 11.5 V17.5 M152.3 14.5 H158.3" stroke="#e6e6e6" stroke-width="1.4"/>
 <path d="M179.5 11.5 H188.5 L187.8 21 H180.2 Z M178.5 10 H189.5 M182 10 V8.5 H186 V10" stroke="#8e8e8e" stroke-width="1.1" fill="none"/>
 <path d="M182 13 V19.5 M184 13 V19.5 M186 13 V19.5" stroke="#8e8e8e" stroke-width="0.7"/>
</svg>

<svg style="left:1490px;top:0" width="10" height="10"><path d="M10 0 H3 A7 7 0 0 1 10 7 Z" fill="#aebdc5"/><path d="M3 0.3 A7 7 0 0 1 9.7 7" stroke="#333" stroke-width="1" fill="none"/></svg>
<div class="a" style="left:1499px;top:7px;width:1px;height:906px;background:#464646;"></div>
<div class="a" style="left:0px;top:912px;width:1500px;height:2px;background:#363636;"></div>
<div class="a" style="left:0px;top:914px;width:1500px;height:1px;background:#c2c2c2;"></div></body></html>
